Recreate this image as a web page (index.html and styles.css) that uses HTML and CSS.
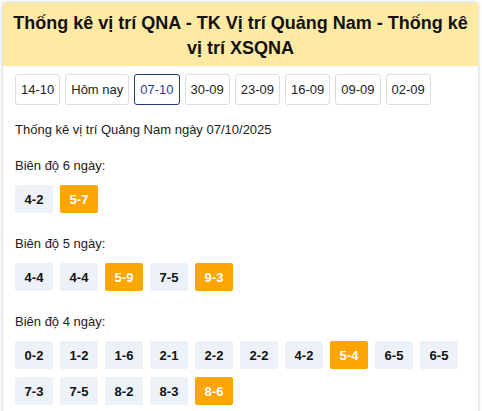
FILE: index.html
```html
<!DOCTYPE html>
<html lang="vi">
<head>
<meta charset="utf-8">
<link rel="stylesheet" href="styles.css">
</head>
<body>
<div class="box">
  <h1 class="title">Thống kê vị trí QNA - TK Vị trí Quảng Nam - Thống kê vị trí XSQNA</h1>
  <div class="content">
    <div class="dates">
      <span class="date">14-10</span>
      <span class="date">Hôm nay</span>
      <span class="date active">07-10</span>
      <span class="date">30-09</span>
      <span class="date">23-09</span>
      <span class="date">16-09</span>
      <span class="date">09-09</span>
      <span class="date">02-09</span>
    </div>
    <p class="intro">Thống kê vị trí Quảng Nam ngày 07/10/2025</p>
    <div class="section">
      <div class="label">Biên độ 6 ngày:</div>
      <div class="chips">
        <span class="chip">4-2</span>
        <span class="chip hot">5-7</span>
      </div>
    </div>
    <div class="section">
      <div class="label">Biên độ 5 ngày:</div>
      <div class="chips">
        <span class="chip">4-4</span>
        <span class="chip">4-4</span>
        <span class="chip hot">5-9</span>
        <span class="chip">7-5</span>
        <span class="chip hot">9-3</span>
      </div>
    </div>
    <div class="section">
      <div class="label">Biên độ 4 ngày:</div>
      <div class="chips">
        <span class="chip">0-2</span>
        <span class="chip">1-2</span>
        <span class="chip">1-6</span>
        <span class="chip">2-1</span>
        <span class="chip">2-2</span>
        <span class="chip">2-2</span>
        <span class="chip">4-2</span>
        <span class="chip hot">5-4</span>
        <span class="chip">6-5</span>
        <span class="chip">6-5</span>
        <span class="chip">7-3</span>
        <span class="chip">7-5</span>
        <span class="chip">8-2</span>
        <span class="chip">8-3</span>
        <span class="chip hot">8-6</span>
      </div>
    </div>
  </div>
</div>
</body>
</html>
```
FILE: styles.css
```css
html, body {
  margin: 0;
  padding: 0;
  background: #fff;
}
body {
  font-family: "Liberation Sans", Arial, sans-serif;
  color: #222;
  padding: 3px 4px 0 3px;
}
.box {
  background: #fff;
  box-shadow: 0 0 4px rgba(0, 0, 0, 0.25);
  height: 420px;
}
.title {
  margin: 0;
  background: #feeaa5;
  font-size: 18px;
  line-height: 25px;
  font-weight: bold;
  text-align: center;
  color: #111;
  padding: 8px 4px 5px;
}
.content {
  padding: 0 12px;
}
.dates {
  display: flex;
  gap: 5px;
  margin-top: 8px;
}
.date {
  display: flex;
  align-items: center;
  height: 31px;
  box-sizing: border-box;
  padding: 0 5px;
  border: 1px solid #ddd;
  border-radius: 3px;
  font-size: 13px;
  color: #222;
}
.date.active {
  border-color: #1f3f80;
  color: #1f4396;
}
.intro {
  margin: 17px 0 0;
  font-size: 13px;
  line-height: 15px;
}
.section {
  margin-top: 21px;
}
.section + .section {
  margin-top: 23px;
}
.label {
  font-size: 13px;
  line-height: 15px;
  margin-bottom: 12px;
}
.chips {
  display: flex;
  flex-wrap: wrap;
  gap: 8px 7px;
}
.chip {
  width: 38px;
  height: 28px;
  display: flex;
  align-items: center;
  justify-content: center;
  background: #edf1f8;
  font-size: 13px;
  font-weight: bold;
  color: #111;
  border-radius: 2px;
}
.chip.hot {
  background: #ffa500;
  color: #fff;
}
```
